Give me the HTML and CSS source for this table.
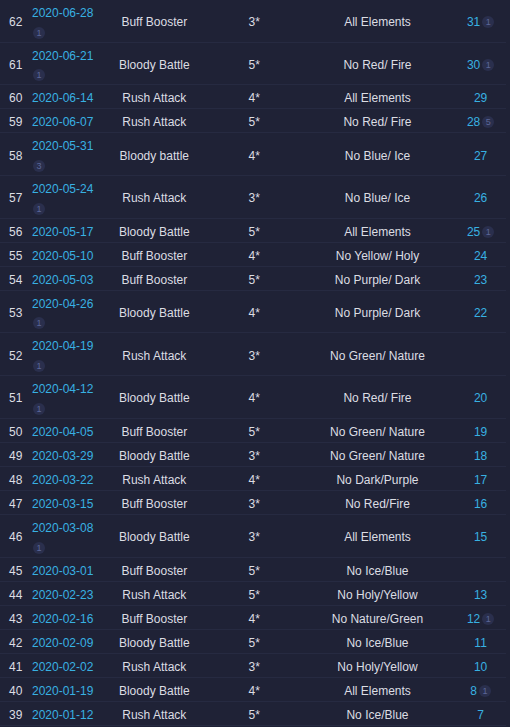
FILE: index.html
```html
<!DOCTYPE html>
<html>
<head>
<meta charset="utf-8">
<link rel="stylesheet" href="styles.css">
</head>
<body>
<table class="events">
  <colgroup>
    <col class="c-id"><col class="c-date"><col class="c-type"><col class="c-star"><col class="c-elem"><col class="c-num">
  </colgroup>
  <tbody>
    <tr><td class="id">62</td><td class="date"><a>2020-06-28</a><span class="badge block">1</span></td><td>Buff Booster</td><td>3*</td><td>All Elements</td><td class="num">31<span class="badge">1</span></td></tr>
    <tr><td class="id">61</td><td class="date"><a>2020-06-21</a><span class="badge block">1</span></td><td>Bloody Battle</td><td>5*</td><td>No Red/ Fire</td><td class="num">30<span class="badge">1</span></td></tr>
    <tr><td class="id">60</td><td class="date"><a>2020-06-14</a></td><td>Rush Attack</td><td>4*</td><td>All Elements</td><td class="num">29</td></tr>
    <tr><td class="id">59</td><td class="date"><a>2020-06-07</a></td><td>Rush Attack</td><td>5*</td><td>No Red/ Fire</td><td class="num">28<span class="badge">5</span></td></tr>
    <tr><td class="id">58</td><td class="date"><a>2020-05-31</a><span class="badge block">3</span></td><td>Bloody battle</td><td>4*</td><td>No Blue/ Ice</td><td class="num">27</td></tr>
    <tr><td class="id">57</td><td class="date"><a>2020-05-24</a><span class="badge block">1</span></td><td>Rush Attack</td><td>3*</td><td>No Blue/ Ice</td><td class="num">26</td></tr>
    <tr><td class="id">56</td><td class="date"><a>2020-05-17</a></td><td>Bloody Battle</td><td>5*</td><td>All Elements</td><td class="num">25<span class="badge">1</span></td></tr>
    <tr><td class="id">55</td><td class="date"><a>2020-05-10</a></td><td>Buff Booster</td><td>4*</td><td>No Yellow/ Holy</td><td class="num">24</td></tr>
    <tr><td class="id">54</td><td class="date"><a>2020-05-03</a></td><td>Buff Booster</td><td>5*</td><td>No Purple/ Dark</td><td class="num">23</td></tr>
    <tr><td class="id">53</td><td class="date"><a>2020-04-26</a><span class="badge block">1</span></td><td>Bloody Battle</td><td>4*</td><td>No Purple/ Dark</td><td class="num">22</td></tr>
    <tr><td class="id">52</td><td class="date"><a>2020-04-19</a><span class="badge block">1</span></td><td>Rush Attack</td><td>3*</td><td>No Green/ Nature</td><td class="num"></td></tr>
    <tr><td class="id">51</td><td class="date"><a>2020-04-12</a><span class="badge block">1</span></td><td>Bloody Battle</td><td>4*</td><td>No Red/ Fire</td><td class="num">20</td></tr>
    <tr><td class="id">50</td><td class="date"><a>2020-04-05</a></td><td>Buff Booster</td><td>5*</td><td>No Green/ Nature</td><td class="num">19</td></tr>
    <tr><td class="id">49</td><td class="date"><a>2020-03-29</a></td><td>Bloody Battle</td><td>3*</td><td>No Green/ Nature</td><td class="num">18</td></tr>
    <tr><td class="id">48</td><td class="date"><a>2020-03-22</a></td><td>Rush Attack</td><td>4*</td><td>No Dark/Purple</td><td class="num">17</td></tr>
    <tr><td class="id">47</td><td class="date"><a>2020-03-15</a></td><td>Buff Booster</td><td>3*</td><td>No Red/Fire</td><td class="num">16</td></tr>
    <tr><td class="id">46</td><td class="date"><a>2020-03-08</a><span class="badge block">1</span></td><td>Bloody Battle</td><td>3*</td><td>All Elements</td><td class="num">15</td></tr>
    <tr><td class="id">45</td><td class="date"><a>2020-03-01</a></td><td>Buff Booster</td><td>5*</td><td>No Ice/Blue</td><td class="num"></td></tr>
    <tr><td class="id">44</td><td class="date"><a>2020-02-23</a></td><td>Rush Attack</td><td>5*</td><td>No Holy/Yellow</td><td class="num">13</td></tr>
    <tr><td class="id">43</td><td class="date"><a>2020-02-16</a></td><td>Buff Booster</td><td>4*</td><td>No Nature/Green</td><td class="num">12<span class="badge">1</span></td></tr>
    <tr><td class="id">42</td><td class="date"><a>2020-02-09</a></td><td>Bloody Battle</td><td>5*</td><td>No Ice/Blue</td><td class="num">11</td></tr>
    <tr><td class="id">41</td><td class="date"><a>2020-02-02</a></td><td>Rush Attack</td><td>3*</td><td>No Holy/Yellow</td><td class="num">10</td></tr>
    <tr><td class="id">40</td><td class="date"><a>2020-01-19</a></td><td>Bloody Battle</td><td>4*</td><td>All Elements</td><td class="num">8<span class="badge">1</span></td></tr>
    <tr><td class="id">39</td><td class="date"><a>2020-01-12</a></td><td>Rush Attack</td><td>5*</td><td>No Ice/Blue</td><td class="num">7</td></tr>
  </tbody>
</table>
</body>
</html>
```
FILE: styles.css
```css
html, body {
  margin: 0;
  padding: 0;
  background: #1f2236;
}
body {
  font-family: "Liberation Sans", Arial, sans-serif;
  font-size: 12px;
  line-height: 14px;
  color: #dcdde3;
}
.events {
  table-layout: fixed;
  width: 506px;
  border-collapse: separate;
  border-spacing: 0;
}
.c-id { width: 28px; }
.c-date { width: 72px; }
.c-type { width: 108.6px; }
.c-star { width: 91.2px; }
.c-elem { width: 155.4px; }
.c-num { width: 50.8px; }

.events td {
  padding: 6px 0 3px;
  border-bottom: 1px solid #262a41;
  text-align: center;
  vertical-align: middle;
  white-space: nowrap;
}
.events td.id {
  text-align: left;
  padding-left: 9px;
}
.events td.date {
  text-align: left;
  padding-left: 4px;
}
.date a {
  color: #38b1e2;
  text-decoration: none;
}
.events td.num {
  color: #38b1e2;
}
.badge {
  display: inline-block;
  width: 12px;
  height: 12px;
  margin-left: 2px;
  border-radius: 50%;
  background: #2a2f4d;
  color: #5c6798;
  font-size: 9px;
  line-height: 12px;
  text-align: center;
  vertical-align: 1px;
}
.badge.block {
  display: block;
  margin: 6.7px 0 0 1px;
}
```
